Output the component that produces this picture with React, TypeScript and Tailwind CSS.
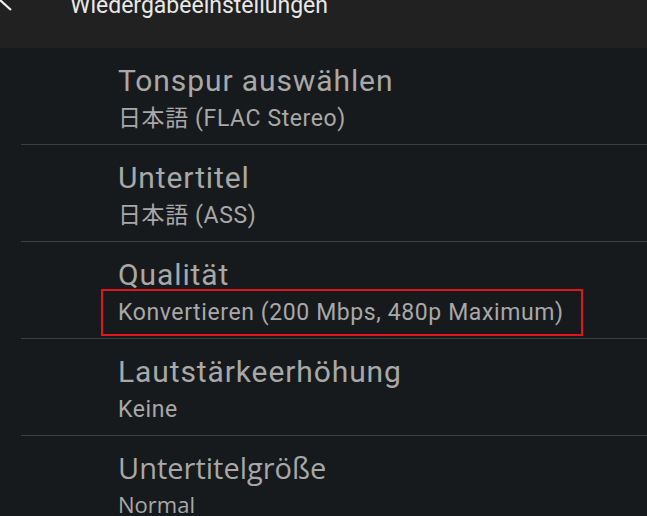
import React from "react";

type Setting = {
  title: string;
  value: string;
  highlight?: boolean;
  droid?: boolean;
};

const settings: Setting[] = [
  { title: "Tonspur auswählen", value: "日本語 (FLAC Stereo)" },
  { title: "Untertitel", value: "日本語 (ASS)" },
  { title: "Qualität", value: "Konvertieren (200 Mbps, 480p Maximum)", highlight: true },
  { title: "Lautstärkeerhöhung", value: "Keine" },
  { title: "Untertitelgröße", value: "Normal", droid: true },
];

const roboto = { fontFamily: "Roboto, 'Noto Sans CJK JP', sans-serif" };
const openSans = { fontFamily: "'Open Sans', 'Noto Sans', sans-serif" };

export default function App() {
  return (
    <div className="w-[647px] h-[516px] overflow-hidden bg-[#171a1d]" style={roboto}>
      {/* Header */}
      <div className="relative h-[48px] bg-[#212121] overflow-hidden">
        <svg
          className="absolute left-[-12px] top-[-12px]"
          width="28"
          height="28"
          viewBox="0 0 28 28"
          fill="none"
          stroke="#f0f0f0"
          strokeWidth="2.2"
        >
          <path d="M12 12 L23 22" />
        </svg>
        <div className="absolute left-[70px] top-[-8px] text-[23px] leading-[28px] text-[#e8e8e8] whitespace-nowrap">
          Wiedergabeeinstellungen
        </div>
      </div>

      {/* List */}
      <div className="flex flex-col">
        {settings.map((s, i) => (
          <div key={s.title} className="relative flex flex-col">
            <div
              className="h-[96px] flex flex-col pl-[118px] pt-[15px]"
              style={s.droid ? openSans : undefined}
            >
              <div
                className={
                  s.droid
                    ? "-mt-[1px] text-[29px] leading-[36px] text-[#a8a8a8] whitespace-nowrap"
                    : "text-[30px] leading-[36px] tracking-[0.9px] text-[#a8a8a8] whitespace-nowrap"
                }
              >
                {s.title}
              </div>
              <div
                className={
                  s.droid
                    ? "mt-[3px] text-[22px] leading-[30px] text-[#a8a8a8] whitespace-nowrap"
                    : "mt-[5px] text-[23px] leading-[30px] tracking-[0.6px] text-[#a8a8a8] whitespace-nowrap"
                }
              >
                {s.value}
              </div>
            </div>
            {s.highlight && (
              <div className="absolute left-[101px] top-[47px] w-[482px] h-[47px] border-2 border-[#e0161b]" />
            )}
            {i < settings.length - 1 && <div className="ml-[21px] h-px bg-[#3c3f42]" />}
          </div>
        ))}
      </div>
    </div>
  );
}
